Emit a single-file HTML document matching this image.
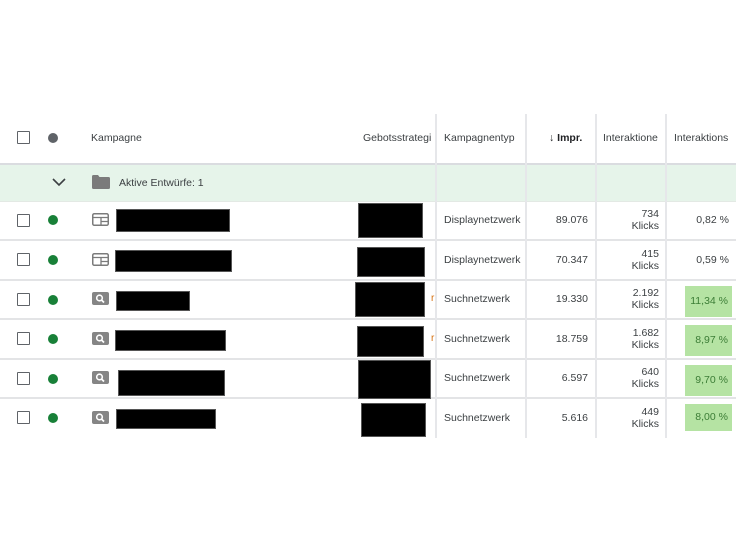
<!DOCTYPE html>
<html><head><meta charset="utf-8"><style>
body{margin:0;width:736px;height:552px;background:#fff;position:relative;overflow:hidden;font-family:"Liberation Sans",sans-serif;color:#3c4043;font-size:10.5px}
.a{position:absolute}
.hl{position:absolute;left:0;width:736px;height:2px;background:#e3e4e6}
.vl{position:absolute;width:2px;background:#e6e7ea}
.cb{position:absolute;left:17px;width:11px;height:11px;border:1.6px solid #5f6368;border-radius:1px}
.dot{position:absolute;left:48px;width:10px;height:10px;border-radius:50%;background:#188038}
.blk{position:absolute;background:#000;border:1px solid #555}
.t{position:absolute;white-space:nowrap}
.r{text-align:right}
.g{position:absolute;left:685px;width:47px;background:#b5e3a3;color:#3c7d36;text-align:right;box-sizing:border-box;padding-right:4px}
.ic{position:absolute;left:92px;width:17px;height:13px;background:#888;border-radius:2px}
</style></head><body>
<div class="a" style="left:0;top:165px;width:736px;height:36px;background:#e6f4ea"></div>
<div class="hl" style="top:163px;background:#dadce0"></div>
<div class="hl" style="top:201px;height:1px;background:#e3e9e4"></div>
<div class="hl" style="top:239px"></div>
<div class="hl" style="top:279px"></div>
<div class="hl" style="top:318px"></div>
<div class="hl" style="top:358px"></div>
<div class="hl" style="top:397px"></div>
<div class="vl" style="left:435px;top:114px;height:324px"></div>
<div class="vl" style="left:525px;top:114px;height:324px"></div>
<div class="vl" style="left:595px;top:114px;height:324px"></div>
<div class="vl" style="left:665px;top:114px;height:324px"></div>
<!-- header -->
<div class="cb" style="top:131px"></div>
<div class="dot" style="top:133px;background:#5f6368"></div>
<div class="t" style="left:91px;top:132px">Kampagne</div>
<div class="t" style="left:363px;top:132px">Gebotsstrategi</div>
<div class="t" style="left:444px;top:132px">Kampagnentyp</div>
<div class="t" style="left:549px;top:132px;color:#202124">&#8595; <b style="font-weight:600">Impr.</b></div>
<div class="t" style="left:603px;top:132px">Interaktione</div>
<div class="t" style="left:674px;top:132px">Interaktions</div>
<!-- group -->
<svg class="a" style="left:51px;top:177px" width="16" height="10"><path d="M2 2 L8 8 L14 2" fill="none" stroke="#3c4043" stroke-width="1.6"/></svg>
<svg class="a" style="left:92px;top:175px" width="18" height="14"><path d="M0 1.5 Q0 0 1.5 0 H6 L7.5 2 H16.5 Q18 2 18 3.5 V12.5 Q18 14 16.5 14 H1.5 Q0 14 0 12.5Z" fill="#7b7b7b"/></svg>
<div class="t" style="left:119px;top:177px">Aktive Entwürfe: 1</div>
<!-- rows -->
<div class="cb" style="top:214px"></div><div class="dot" style="top:215px"></div>
<svg class="a" style="left:92px;top:213px" width="17" height="13"><rect x=".75" y=".75" width="15.5" height="11.5" rx="1.5" fill="none" stroke="#7b7b7b" stroke-width="1.5"/><path d="M1 4.5H16M9 4.5V12M9 8.5H16" stroke="#7b7b7b" stroke-width="1.3"/></svg>
<div class="cb" style="top:253px"></div><div class="dot" style="top:255px"></div>
<svg class="a" style="left:92px;top:253px" width="17" height="13"><rect x=".75" y=".75" width="15.5" height="11.5" rx="1.5" fill="none" stroke="#7b7b7b" stroke-width="1.5"/><path d="M1 4.5H16M9 4.5V12M9 8.5H16" stroke="#7b7b7b" stroke-width="1.3"/></svg>
<div class="cb" style="top:293px"></div><div class="dot" style="top:295px"></div>
<div class="cb" style="top:332px"></div><div class="dot" style="top:334px"></div>
<div class="cb" style="top:372px"></div><div class="dot" style="top:374px"></div>
<div class="cb" style="top:411px"></div><div class="dot" style="top:413px"></div>
<svg class="a" style="left:92px;top:292px" width="17" height="13"><rect width="17" height="13" rx="2" fill="#858585"/><circle cx="7.5" cy="6" r="2.8" fill="none" stroke="#fff" stroke-width="1.6"/><path d="M9.5 8L12 10.5" stroke="#fff" stroke-width="1.8"/></svg>
<svg class="a" style="left:92px;top:332px" width="17" height="13"><rect width="17" height="13" rx="2" fill="#858585"/><circle cx="7.5" cy="6" r="2.8" fill="none" stroke="#fff" stroke-width="1.6"/><path d="M9.5 8L12 10.5" stroke="#fff" stroke-width="1.8"/></svg>
<svg class="a" style="left:92px;top:371px" width="17" height="13"><rect width="17" height="13" rx="2" fill="#858585"/><circle cx="7.5" cy="6" r="2.8" fill="none" stroke="#fff" stroke-width="1.6"/><path d="M9.5 8L12 10.5" stroke="#fff" stroke-width="1.8"/></svg>
<svg class="a" style="left:92px;top:411px" width="17" height="13"><rect width="17" height="13" rx="2" fill="#858585"/><circle cx="7.5" cy="6" r="2.8" fill="none" stroke="#fff" stroke-width="1.6"/><path d="M9.5 8L12 10.5" stroke="#fff" stroke-width="1.8"/></svg>
<!-- redactions -->
<div class="blk" style="left:116px;top:209px;width:112px;height:21px"></div>
<div class="blk" style="left:358px;top:203px;width:63px;height:33px"></div>
<div class="blk" style="left:115px;top:250px;width:115px;height:20px"></div>
<div class="blk" style="left:357px;top:247px;width:66px;height:28px"></div>
<div class="blk" style="left:116px;top:291px;width:72px;height:18px"></div>
<div class="blk" style="left:355px;top:282px;width:68px;height:33px"></div>
<div class="blk" style="left:115px;top:330px;width:109px;height:19px"></div>
<div class="blk" style="left:357px;top:326px;width:65px;height:29px"></div>
<div class="blk" style="left:118px;top:370px;width:105px;height:24px"></div>
<div class="blk" style="left:358px;top:360px;width:71px;height:37px"></div>
<div class="blk" style="left:116px;top:409px;width:98px;height:18px"></div>
<div class="blk" style="left:361px;top:403px;width:63px;height:32px"></div>
<div class="t" style="left:431px;top:293px;color:#d56e0c;font-size:10px">r</div>
<div class="t" style="left:431px;top:333px;color:#d56e0c;font-size:10px">r</div>
<!-- data -->
<div class="t" style="left:444px;top:214px">Displaynetzwerk</div>
<div class="t" style="left:444px;top:254px">Displaynetzwerk</div>
<div class="t" style="left:444px;top:293px">Suchnetzwerk</div>
<div class="t" style="left:444px;top:333px">Suchnetzwerk</div>
<div class="t" style="left:444px;top:372px">Suchnetzwerk</div>
<div class="t" style="left:444px;top:412px">Suchnetzwerk</div>
<div class="t r" style="left:530px;width:58px;top:214px">89.076</div>
<div class="t r" style="left:530px;width:58px;top:254px">70.347</div>
<div class="t r" style="left:530px;width:58px;top:293px">19.330</div>
<div class="t r" style="left:530px;width:58px;top:333px">18.759</div>
<div class="t r" style="left:530px;width:58px;top:372px">6.597</div>
<div class="t r" style="left:530px;width:58px;top:412px">5.616</div>
<div class="t r" style="left:600px;width:59px;top:208px;line-height:12px">734<br>Klicks</div>
<div class="t r" style="left:600px;width:59px;top:248px;line-height:12px">415<br>Klicks</div>
<div class="t r" style="left:600px;width:59px;top:287px;line-height:12px">2.192<br>Klicks</div>
<div class="t r" style="left:600px;width:59px;top:327px;line-height:12px">1.682<br>Klicks</div>
<div class="t r" style="left:600px;width:59px;top:366px;line-height:12px">640<br>Klicks</div>
<div class="t r" style="left:600px;width:59px;top:406px;line-height:12px">449<br>Klicks</div>
<div class="t r" style="left:670px;width:59px;top:214px">0,82 %</div>
<div class="t r" style="left:670px;width:59px;top:254px">0,59 %</div>
<div class="g" style="top:286px;height:31px;line-height:31px">11,34 %</div>
<div class="g" style="top:325px;height:31px;line-height:31px">8,97 %</div>
<div class="g" style="top:365px;height:31px;line-height:31px">9,70 %</div>
<div class="g" style="top:404px;height:27px;line-height:27px">8,00 %</div>
</body></html>
